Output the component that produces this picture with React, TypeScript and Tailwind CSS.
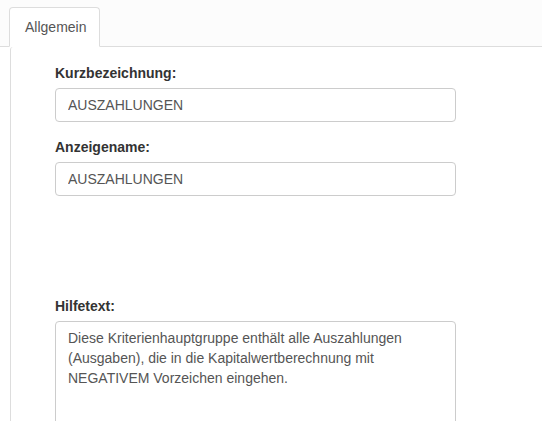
const fields = [
  { label: 'Kurzbezeichnung:', value: 'AUSZAHLUNGEN' },
  { label: 'Anzeigename:', value: 'AUSZAHLUNGEN' },
]

const helpText =
  'Diese Kriterienhauptgruppe enthält alle Auszahlungen (Ausgaben), die in die Kapitalwertberechnung mit NEGATIVEM Vorzeichen eingehen.'

function App() {
  return (
    <div className="h-[421px] w-full overflow-hidden bg-white font-['Liberation_Sans',Arial,sans-serif] text-[14px] leading-[20px] text-[#333]">
      {/* Tabs */}
      <div className="flex border-b border-[#ddd] bg-[#fcfcfc] pl-[9px] pt-[7px]">
        <div className="-mb-px w-[91px] rounded-t-[4px] border border-[#ddd] border-b-white bg-white py-[9px] pl-[15px] text-[#555]">
          Allgemein
        </div>
      </div>

      {/* Tab content */}
      <div className="ml-[10px] h-full rounded-tl-[3px] border-l border-[#ddd] pl-[44px] pt-[16px]">
        <div className="w-[401px]">
          {fields.map((f) => (
            <div key={f.label} className="mb-[15px]">
              <label className="mb-[5px] block font-bold">{f.label}</label>
              <input
                readOnly
                value={f.value}
                className="block h-[34px] w-full rounded-[4px] border border-[#ccc] px-[12px] py-[6px] text-[#555] outline-none"
              />
            </div>
          ))}

          <div className="mt-[100px]">
            <label className="mb-[5px] block font-bold">Hilfetext:</label>
            <textarea
              readOnly
              defaultValue={helpText}
              className="block h-[120px] w-full resize-none rounded-[4px] border border-[#ccc] px-[12px] py-[6px] leading-[20px] text-[#555] outline-none"
            />
          </div>
        </div>
      </div>
    </div>
  )
}

export default App
